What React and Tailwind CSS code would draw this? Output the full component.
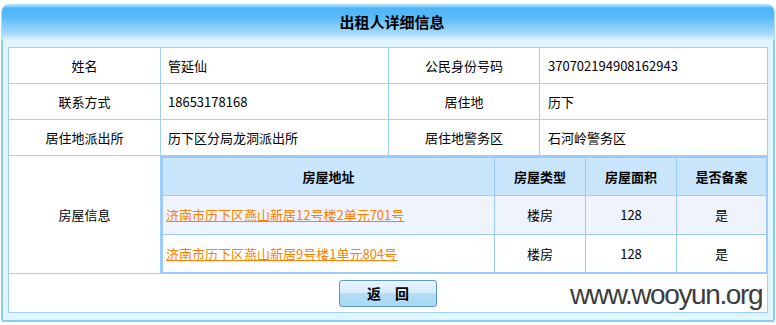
export default function App() {
  const rows = [
    ["姓名", "管延仙", "公民身份号码", "370702194908162943"],
    ["联系方式", "18653178168", "居住地", "历下"],
    ["居住地派出所", "历下区分局龙洞派出所", "居住地警务区", "石河岭警务区"],
  ];
  const houses = [
    ["济南市历下区燕山新居12号楼2单元701号", "楼房", "128", "是"],
    ["济南市历下区燕山新居9号楼1单元804号", "楼房", "128", "是"],
  ];
  return (
    <div className="w-[776px] h-[325px] bg-white overflow-hidden relative font-['Noto_Sans_CJK_SC',sans-serif] text-[13px] text-black">
      <div className="ml-[1px] mt-[4px] w-[774px]">
        <div className="h-[36px] rounded-t-[8px] bg-[linear-gradient(to_bottom,#b3e1fb_0px,#4bb5f8_3px,#58baf8_12px,#a3d9fa_28px,#e0f4fd_36px)] flex items-center justify-center border-x border-t border-[#a9dcf9]">
          <span className="text-[15px] font-bold pl-[8px]">出租人详细信息</span>
        </div>
        <div className="bg-[#e0f5fd] border-x-2 border-b-2 border-[#8ccaf2] px-[5px] pt-[7px] pb-[7px] rounded-b-[3px]">
          <div className="w-[760px] border border-[#9dcffb] bg-white">
            {rows.map((r, i) => (
              <div key={i} className="flex h-[36px] border-b border-[#9dcffb]">
                <div className="w-[152px] border-r border-[#9dcffb] flex items-center justify-center">{r[0]}</div>
                <div className="w-[228px] border-r border-[#9dcffb] flex items-center pl-[7px]">{r[1]}</div>
                <div className="w-[151px] border-r border-[#9dcffb] flex items-center justify-center">{r[2]}</div>
                <div className="flex-1 flex items-center pl-[8px]">{r[3]}</div>
              </div>
            ))}
            <div className="flex h-[118px] border-b border-[#9dcffb]">
              <div className="w-[152px] border-r border-[#9dcffb] flex items-center justify-center">房屋信息</div>
              <div className="flex-1 flex flex-col border-t-2 border-l-2 border-r border-b border-[#9ccbf9]">
                <div className="flex h-[38px] border-b border-[#9ccbf9] bg-[#c8e5fc] font-bold">
                  <div className="w-[332px] border-r border-[#9ccbf9] flex items-center justify-center">房屋地址</div>
                  <div className="w-[91px] border-r border-[#9ccbf9] flex items-center justify-center">房屋类型</div>
                  <div className="w-[91px] border-r border-[#9ccbf9] flex items-center justify-center">房屋面积</div>
                  <div className="flex-1 flex items-center justify-center">是否备案</div>
                </div>
                {houses.map((h, i) => (
                  <div key={i} className={i === 0 ? "flex h-[39px] border-b border-[#9ccbf9] bg-[#eef3fc]" : "flex h-[37px] bg-white"}>
                    <div className="w-[332px] border-r border-[#9ccbf9] flex items-center pl-[3px]">
                      <a href="#" className="text-[#ff7f00] underline">{h[0]}</a>
                    </div>
                    <div className="w-[91px] border-r border-[#9ccbf9] flex items-center justify-center">{h[1]}</div>
                    <div className="w-[91px] border-r border-[#9ccbf9] flex items-center justify-center">{h[2]}</div>
                    <div className="flex-1 flex items-center justify-center">{h[3]}</div>
                  </div>
                ))}
              </div>
            </div>
            <div className="h-[38px] flex items-center justify-center">
              <button className="w-[98px] h-[27px] rounded-[3px] border border-[#5b98c8] bg-[linear-gradient(to_bottom,#e6f4fc_0%,#d3ecf9_50%,#b2ddf5_50%,#a8d8f4_100%)] text-[14px] font-bold flex items-center justify-center">
                返　回
              </button>
            </div>
          </div>
        </div>
      </div>
      <div className="absolute left-[570px] top-[281px] text-[28px] leading-none tracking-[-1.4px] text-[#3d3d3d] font-['Liberation_Sans',sans-serif] pointer-events-none">
        www.wooyun.org
      </div>
    </div>
  );
}
